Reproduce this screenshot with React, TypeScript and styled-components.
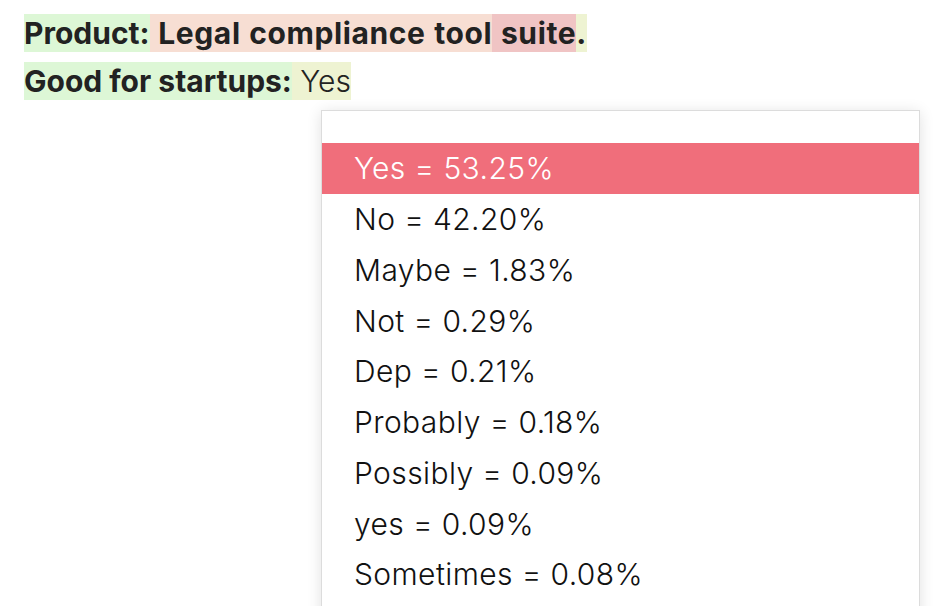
import React from 'react'
import styled, { createGlobalStyle } from 'styled-components'

const GlobalStyle = createGlobalStyle`
    html, body {
        margin: 0;
        padding: 0;
        background: #ffffff;
    }
    body {
        font-family: Inter, Roboto, "Liberation Sans", sans-serif;
        color: #222222;
        overflow: hidden;
    }
`

type Tone = 'green' | 'salmon' | 'pink' | 'yellow'

const toneColors: Record<Tone, string> = {
    green: '#ddf7d6',
    salmon: '#f7ded3',
    pink: '#f0c4c4',
    yellow: '#eef3d2',
}

interface Span {
    text: string
    tone: Tone
    bold?: boolean
    value?: boolean
}

const lines: Span[][] = [
    [
        { text: 'Product:', tone: 'green', bold: true },
        { text: ' Legal compliance tool', tone: 'salmon', bold: true, value: true },
        { text: ' suite', tone: 'pink', bold: true, value: true },
        { text: '.', tone: 'yellow', bold: true, value: true },
    ],
    [
        { text: 'Good for startups:', tone: 'green', bold: true },
        { text: ' Yes', tone: 'yellow', value: true },
    ],
]

const options = [
    'Yes = 53.25%',
    'No = 42.20%',
    'Maybe = 1.83%',
    'Not = 0.29%',
    'Dep = 0.21%',
    'Probably = 0.18%',
    'Possibly = 0.09%',
    'yes = 0.09%',
    'Sometimes = 0.08%',
]

export default function App() {
    return (
        <Page>
            <GlobalStyle />
            <Fields>
                {lines.map((line, i) => (
                    <FieldLine key={i}>
                        {line.map((span, j) => (
                            <Mark key={j} $tone={span.tone} $bold={span.bold} $value={span.value}>
                                {span.text}
                            </Mark>
                        ))}
                    </FieldLine>
                ))}
            </Fields>
            <Dropdown>
                <Spacer />
                {options.map((option, i) => (
                    <Option key={option} $active={i === 0}>{option}</Option>
                ))}
            </Dropdown>
        </Page>
    )
}

const Page = styled.div`
    width: 952px;
    height: 606px;
    padding: 14px 0 0 24px;
    box-sizing: border-box;
`

const Fields = styled.div`
    display: flex;
    flex-direction: column;
    gap: 10px;
`

const FieldLine = styled.div`
    display: flex;
    white-space: pre;
    font-size: 30px;
    line-height: 38px;
`

const Mark = styled.span<{ $tone: Tone; $bold?: boolean; $value?: boolean }>`
    background: ${p => toneColors[p.$tone]};
    font-weight: ${p => (p.$bold ? 700 : 300)};
    letter-spacing: ${p => (p.$bold && p.$value ? '0.6px' : '0')};
    word-spacing: ${p => (p.$bold && p.$value ? '1px' : '0')};
    color: #222222;
`

const Dropdown = styled.div`
    margin: 10px 0 0 297px;
    width: 597px;
    height: 520px;
    background: #ffffff;
    border: 1px solid #dcdcdc;
    box-shadow: 0 2px 14px rgba(0, 0, 0, 0.12);
    display: flex;
    flex-direction: column;
`

const Spacer = styled.div`
    height: 32px;
`

const Option = styled.div<{ $active?: boolean }>`
    height: 50.75px;
    flex-shrink: 0;
    display: flex;
    align-items: center;
    padding-left: 32px;
    font-size: 30px;
    font-weight: 300;
    letter-spacing: 0.4px;
    color: ${p => (p.$active ? '#ffffff' : '#111111')};
    background: ${p => (p.$active ? '#f06e7b' : 'transparent')};
`
